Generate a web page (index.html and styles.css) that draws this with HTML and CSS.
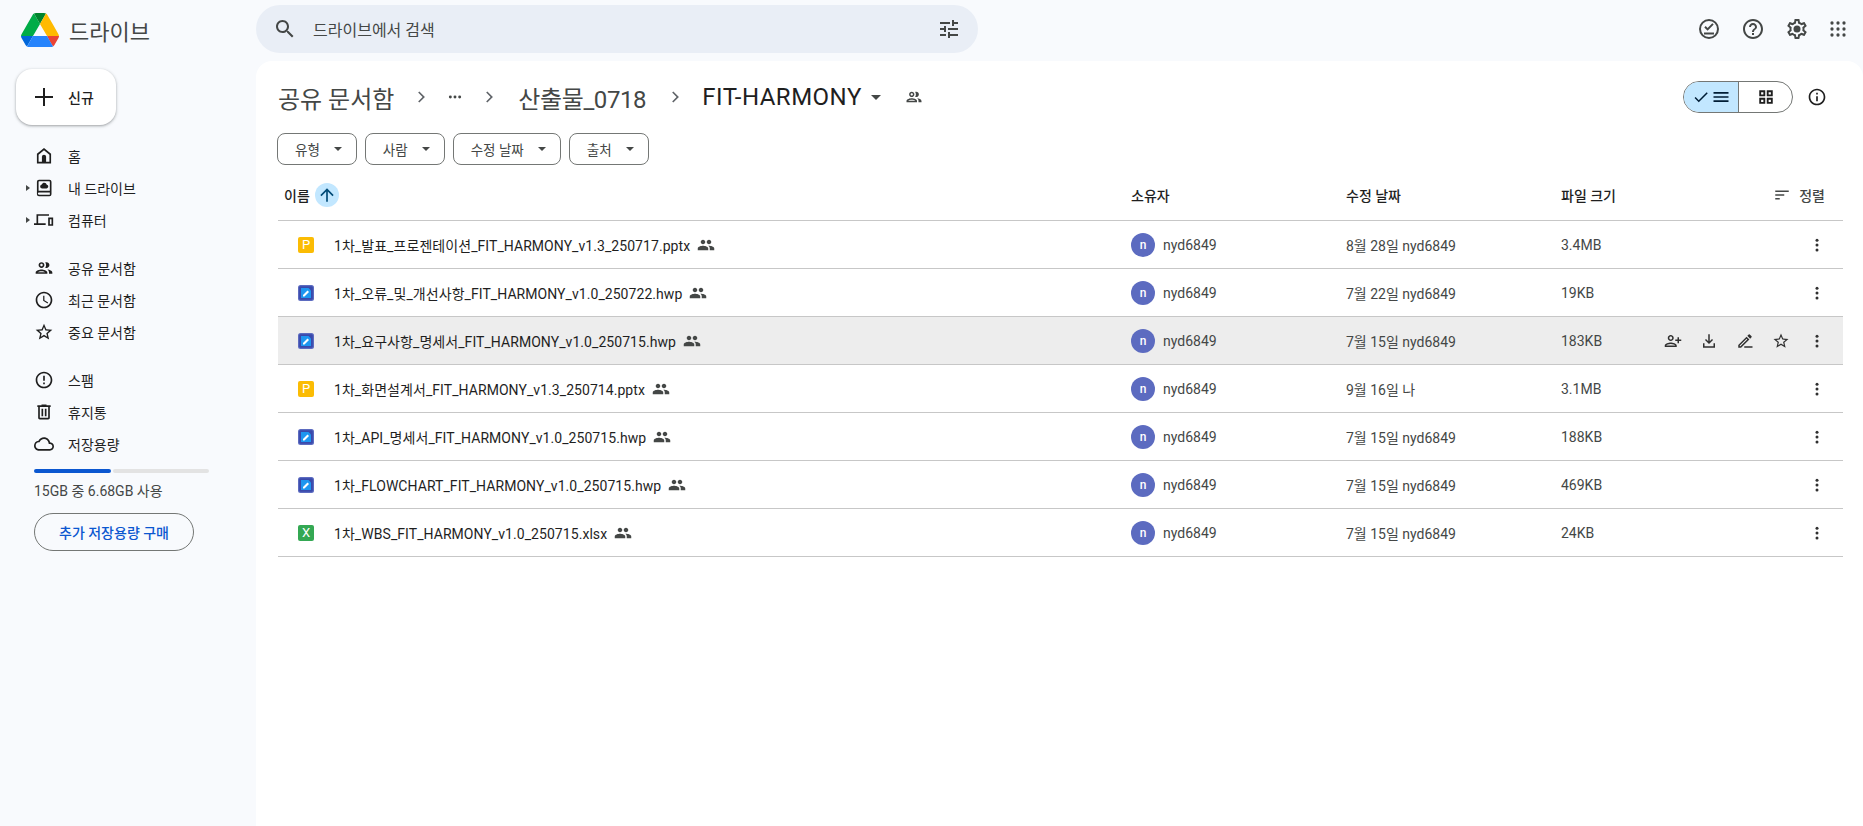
FILE: index.html
```html
<!DOCTYPE html>
<html lang="ko">
<head>
<meta charset="utf-8">
<title>Drive</title>
<link rel="stylesheet" href="styles.css">
</head>
<body>
<svg class="sprite" xmlns="http://www.w3.org/2000/svg">
  <symbol id="i-home" viewBox="0 0 24 24"><path fill-rule="evenodd" d="M12 2.500 3.500 9.400V21h17V9.400L12 2.500zm0 2.600 6.500 5.300V19h-13v-8.600L12 5.100z"/><path d="M9.500 13a2.500 2.500 0 0 1 5 0v7h-5z"/></symbol>
  <symbol id="i-mydrive" viewBox="0 0 24 24"><path d="M6 2h12.500A2.500 2.500 0 0 1 21 4.500v15a2.500 2.500 0 0 1-2.500 2.500H6a2.500 2.500 0 0 1-2.500-2.500v-15A2.500 2.500 0 0 1 6 2zm0 2a.5.5 0 0 0-.5.5V15.400c.2-.1.400-.1.500-.1h13V4.500a.5.5 0 0 0-.5-.5H6zm0 13.300a1.300 1.300 0 0 0 0 2.700h13v-2.700H6zM12.300 5.800c1.500 0 2.700 1 3 2.400 1 .2 1.800 1 1.800 2.100 0 1.200-1 2.200-2.200 2.200H9.800c-1.300 0-2.400-1-2.400-2.400 0-1.200.9-2.200 2-2.400.5-1.200 1.600-1.900 2.900-1.900z"/></symbol>
  <symbol id="i-computer" viewBox="0 0 24 24"><path d="M3 5h15v2H5v9h9v2H-1v-2h4V5zm14 4h6v10h-6V9zm2 2v6h2v-6h-2z"/></symbol>
  <symbol id="i-shared" viewBox="0 0 24 24"><path d="M9 13.750c-2.340 0-7 1.170-7 3.500V19h14v-1.750c0-2.330-4.660-3.500-7-3.500zM4.340 17c.84-.58 2.870-1.250 4.660-1.250s3.820.67 4.660 1.250H4.340zM9 12c1.930 0 3.500-1.570 3.500-3.500S10.930 5 9 5 5.500 6.570 5.500 8.500 7.070 12 9 12zm0-5c.83 0 1.500.67 1.500 1.500S9.830 10 9 10s-1.500-.67-1.500-1.500S8.170 7 9 7zm7.040 6.810c1.160.84 1.960 1.960 1.960 3.440V19h4v-1.750c0-2.020-3.500-3.170-5.960-3.440zM15 12c1.930 0 3.500-1.570 3.500-3.500S16.930 5 15 5c-.54 0-1.040.13-1.500.35.63.89 1 1.980 1 3.150s-.37 2.260-1 3.150c.46.22.96.35 1.500.35z"/></symbol>
  <symbol id="i-people" viewBox="0 0 24 24"><path d="M16 11c1.660 0 2.990-1.340 2.990-3S17.660 5 16 5s-3 1.340-3 3 1.340 3 3 3zm-8 0c1.660 0 2.990-1.340 2.990-3S9.660 5 8 5 5 6.340 5 8s1.340 3 3 3zm0 2c-2.330 0-7 1.170-7 3.500V19h14v-2.500c0-2.330-4.670-3.500-7-3.500zm8 0c-.29 0-.62.02-.97.05 1.160.84 1.970 1.970 1.970 3.450V19h6v-2.500c0-2.330-4.670-3.500-7-3.500z"/></symbol>
  <symbol id="i-clock" viewBox="0 0 24 24"><path d="M11.990 2C6.470 2 2 6.480 2 12s4.470 10 9.990 10C17.520 22 22 17.520 22 12S17.520 2 11.990 2zM12 20c-4.420 0-8-3.580-8-8s3.580-8 8-8 8 3.580 8 8-3.580 8-8 8zm.5-13H11v6l5.250 3.150.75-1.230-4.500-2.670z"/></symbol>
  <symbol id="i-star" viewBox="0 0 24 24"><path d="M22 9.240l-7.190-.62L12 2 9.190 8.630 2 9.240l5.460 4.730L5.820 21 12 17.270 18.180 21l-1.630-7.030L22 9.240zM12 15.400l-3.760 2.270 1-4.280-3.320-2.880 4.380-.38L12 6.100l1.710 4.040 4.380.38-3.320 2.880 1 4.280L12 15.400z"/></symbol>
  <symbol id="i-spam" viewBox="0 0 24 24"><path d="M11 15h2v2h-2zm0-8h2v6h-2zm.99-5C6.470 2 2 6.480 2 12s4.470 10 9.990 10C17.520 22 22 17.520 22 12S17.520 2 11.990 2zM12 20c-4.420 0-8-3.580-8-8s3.580-8 8-8 8 3.580 8 8-3.580 8-8 8z"/></symbol>
  <symbol id="i-trash" viewBox="0 0 24 24"><path d="M15 4V3H9v1H4v2h1v13c0 1.100.9 2 2 2h10c1.100 0 2-.9 2-2V6h1V4h-5zm2 15H7V6h10v13zM9 8h2v9H9zm4 0h2v9h-2z"/></symbol>
  <symbol id="i-cloud" viewBox="0 0 24 24"><path d="M19.350 10.040C18.670 6.590 15.640 4 12 4 9.110 4 6.600 5.640 5.350 8.040 2.340 8.360 0 10.910 0 14c0 3.310 2.690 6 6 6h13c2.760 0 5-2.240 5-5 0-2.640-2.050-4.780-4.650-4.960zM19 18H6c-2.210 0-4-1.790-4-4 0-2.050 1.530-3.760 3.560-3.970l1.070-.11.5-.95C8.080 7.140 9.940 6 12 6c2.620 0 4.880 1.860 5.390 4.430l.3 1.500 1.530.11c1.560.1 2.780 1.410 2.780 2.960 0 1.650-1.350 3-3 3z"/></symbol>
  <symbol id="i-search" viewBox="0 0 24 24"><path d="M15.500 14h-.79l-.28-.27C15.410 12.590 16 11.110 16 9.500 16 5.910 13.090 3 9.500 3S3 5.910 3 9.500 5.910 16 9.500 16c1.610 0 3.090-.59 4.230-1.570l.27.28v.79l5 4.990L20.490 19l-4.990-5zm-6 0C7.010 14 5 11.990 5 9.500S7.010 5 9.500 5 14 7.010 14 9.500 11.990 14 9.500 14z"/></symbol>
  <symbol id="i-tune" viewBox="0 0 24 24"><path d="M3 17v2h6v-2H3zM3 5v2h10V5H3zm10 16v-2h8v-2h-8v-2h-2v6h2zM7 9v2H3v2h4v2h2V9H7zm14 4v-2H11v2h10zm-6-4h2V7h4V5h-4V3h-2v6z"/></symbol>
  <symbol id="i-offline" viewBox="0 0 24 24"><path d="M12 2a10 10 0 1 0 0 20 10 10 0 0 0 0-20zm0 18a8 8 0 1 1 0-16 8 8 0 0 1 0 16zM7 15.500h10v2H7zM10.600 13.700 7.300 10.400l1.400-1.400 1.900 1.900 4.700-4.700 1.400 1.400z"/></symbol>
  <symbol id="i-help" viewBox="0 0 24 24"><path d="M11 18h2v-2h-2v2zm1-16C6.480 2 2 6.480 2 12s4.480 10 10 10 10-4.480 10-10S17.520 2 12 2zm0 18c-4.410 0-8-3.590-8-8s3.590-8 8-8 8 3.590 8 8-3.590 8-8 8zm0-14c-2.210 0-4 1.790-4 4h2c0-1.100.9-2 2-2s2 .9 2 2c0 2-3 1.750-3 5h2c0-2.250 3-2.500 3-5 0-2.210-1.790-4-4-4z"/></symbol>
  <symbol id="i-gear" viewBox="0 0 24 24"><path d="M19.430 12.980c.04-.32.07-.64.07-.98 0-.34-.03-.66-.07-.98l2.110-1.650c.19-.15.24-.42.12-.64l-2-3.460c-.09-.16-.26-.25-.44-.25-.06 0-.12.01-.17.03l-2.490 1c-.52-.4-1.080-.73-1.690-.98l-.38-2.650C14.460 2.180 14.250 2 14 2h-4c-.25 0-.46.18-.49.42l-.38 2.650c-.61.25-1.170.59-1.690.98l-2.490-1c-.06-.02-.12-.03-.18-.03-.17 0-.34.09-.43.25l-2 3.460c-.13.22-.07.49.12.64l2.110 1.650c-.04.32-.07.65-.07.98 0 .33.03.66.07.98l-2.110 1.650c-.19.15-.24.42-.12.64l2 3.460c.09.16.26.25.44.25.06 0 .12-.01.17-.03l2.490-1c.52.4 1.080.73 1.690.98l.38 2.650c.03.24.24.42.49.42h4c.25 0 .46-.18.49-.42l.38-2.650c.61-.25 1.170-.59 1.690-.98l2.490 1c.06.02.12.03.18.03.17 0 .34-.09.43-.25l2-3.460c.12-.22.07-.49-.12-.64l-2.110-1.650zm-1.980-1.710c.04.31.05.52.05.73 0 .21-.02.43-.05.73l-.14 1.130.89.7 1.080.84-.7 1.210-1.270-.51-1.040-.42-.9.68c-.43.32-.84.56-1.250.73l-1.060.43-.16 1.130-.2 1.350h-1.400l-.19-1.350-.16-1.130-1.060-.43c-.43-.18-.83-.41-1.230-.71l-.91-.7-1.060.43-1.270.51-.7-1.210 1.080-.84.89-.7-.14-1.130c-.03-.31-.05-.54-.05-.74s.02-.43.05-.73l.14-1.130-.89-.7-1.080-.84.7-1.210 1.270.51 1.040.42.9-.68c.43-.32.84-.56 1.250-.73l1.060-.43.16-1.130.2-1.350h1.390l.19 1.350.16 1.130 1.060.43c.43.18.83.41 1.230.71l.91.7 1.060-.43 1.270-.51.7 1.210-1.070.85-.89.7.14 1.130z"/><circle cx="12" cy="12" r="3.500"/></symbol>
  <symbol id="i-apps" viewBox="0 0 24 24"><circle cx="4" cy="4" r="2.200"/><circle cx="12" cy="4" r="2.200"/><circle cx="20" cy="4" r="2.200"/><circle cx="4" cy="12" r="2.200"/><circle cx="12" cy="12" r="2.200"/><circle cx="20" cy="12" r="2.200"/><circle cx="4" cy="20" r="2.200"/><circle cx="12" cy="20" r="2.200"/><circle cx="20" cy="20" r="2.200"/></symbol>
  <symbol id="i-info" viewBox="0 0 24 24"><path d="M11 7h2v2h-2zm0 4h2v6h-2zm1-9C6.480 2 2 6.480 2 12s4.480 10 10 10 10-4.480 10-10S17.520 2 12 2zm0 18c-4.410 0-8-3.590-8-8s3.590-8 8-8 8 3.590 8 8-3.590 8-8 8z"/></symbol>
  <symbol id="i-more" viewBox="0 0 24 24"><circle cx="12" cy="5.500" r="2"/><circle cx="12" cy="12" r="2"/><circle cx="12" cy="18.500" r="2"/></symbol>
  <symbol id="i-addperson" viewBox="0 0 24 24"><path transform="matrix(-1 0 0 1 24 0)" d="M15 12c2.210 0 4-1.790 4-4s-1.790-4-4-4-4 1.790-4 4 1.790 4 4 4zm0-6c1.100 0 2 .9 2 2s-.9 2-2 2-2-.9-2-2 .9-2 2-2zm0 8c-2.670 0-8 1.340-8 4v2h16v-2c0-2.660-5.330-4-8-4zm-6 4c.22-.72 3.310-2 6-2 2.700 0 5.800 1.290 6 2H9zm-3-3v-3h3v-2H6V7H4v3H1v2h3v3h2z"/></symbol>
  <symbol id="i-download" viewBox="0 0 24 24"><path d="M11 3h2v9.200l3-3 1.400 1.400L12 16l-5.400-5.400L8 9.200l3 3V3zM4 15h2v4h12v-4h2v6H4z"/></symbol>
  <symbol id="i-rename" viewBox="0 0 24 24"><path d="M3 17.250V21h3.750L17.810 9.940l-3.750-3.750L3 17.250zM5.920 19H5v-.92l9.060-9.060.92.92L5.920 19zM20.710 7.040a1 1 0 0 0 0-1.410l-2.340-2.340a1 1 0 0 0-1.410 0l-1.830 1.830 3.750 3.750 1.830-1.830zM11 19h11v2H11z"/></symbol>
  <symbol id="i-sort" viewBox="0 0 24 24"><path d="M3 18h6v-2H3v2zM3 6v2h18V6H3zm0 7h12v-2H3v2z"/></symbol>
  <symbol id="i-up" viewBox="0 0 24 24"><path d="M4 12l1.410 1.410L11 7.830V20h2V7.830l5.580 5.590L20 12l-8-8-8 8z"/></symbol>
  <symbol id="i-check" viewBox="0 0 24 24"><path d="M9 16.170 4.830 12l-1.420 1.410L9 19 21 7l-1.410-1.410z"/></symbol>
  <symbol id="i-menu" viewBox="0 0 24 24"><path d="M3 18h18v-2H3v2zm0-5h18v-2H3v2zm0-7v2h18V6H3z"/></symbol>
  <symbol id="i-grid" viewBox="0 0 24 24"><path d="M3 3h8v8H3V3zm2.500 2.500v3h3v-3h-3zM13 3h8v8h-8V3zm2.500 2.500v3h3v-3h-3zM3 13h8v8H3v-8zm2.500 2.500v3h3v-3h-3zM13 13h8v8h-8v-8zm2.500 2.500v3h3v-3h-3z"/></symbol>
  <symbol id="i-chev" viewBox="0 0 24 24"><path d="M8.600 6.700 10 5.300l6.700 6.700-6.700 6.700-1.400-1.400 5.300-5.300z"/></symbol>
  <symbol id="i-dots" viewBox="0 0 24 24"><circle cx="5" cy="12" r="2.200"/><circle cx="12" cy="12" r="2.200"/><circle cx="19" cy="12" r="2.200"/></symbol>
  <symbol id="i-plus" viewBox="0 0 24 24"><path d="M11 3h2v8h8v2h-8v8h-2v-8H3v-2h8z"/></symbol>
  <symbol id="i-hwp" viewBox="0 0 16 16"><rect width="16" height="16" rx="2.500" fill="#5c6bc0"/><rect x="1.200" y="1.200" width="13.600" height="13.600" rx="1.200" fill="#3949ab"/><path d="M3 3h7.500L13 5.500V13H3z" fill="#1e96f0"/><path d="M5 11.500v-1.500l4.500-4.500 1.500 1.500-4.500 4.500z" fill="#fff"/></symbol>
</svg>

<div class="app">
  <div class="brand">
    <svg class="logo" viewBox="0 0 87.300 78"><path d="m6.600 66.850 3.850 6.650c.8 1.400 1.950 2.500 3.300 3.300l13.750-23.800h-27.500c0 1.550.4 3.100 1.200 4.500z" fill="#0066da"/><path d="m43.650 25-13.750-23.800c-1.350.8-2.500 1.900-3.300 3.300l-25.400 44a9.060 9.060 0 0 0 -1.200 4.500h27.500z" fill="#00ac47"/><path d="m73.550 76.800c1.350-.8 2.500-1.900 3.300-3.300l1.600-2.750 7.650-13.250c.8-1.400 1.200-2.950 1.200-4.500h-27.502l5.852 11.500z" fill="#ea4335"/><path d="m43.650 25 13.750-23.800c-1.350-.8-2.900-1.200-4.500-1.200h-18.500c-1.600 0-3.150.45-4.500 1.200z" fill="#00832d"/><path d="m59.800 53h-32.300l-13.750 23.800c1.350.8 2.900 1.200 4.500 1.200h50.800c1.600 0 3.150-.45 4.500-1.200z" fill="#2684fc"/><path d="m73.400 26.500-12.700-22c-.8-1.400-1.950-2.500-3.300-3.300l-13.750 23.800 16.150 28h27.450c0-1.550-.4-3.100-1.200-4.500z" fill="#ffba00"/></svg>
    <span class="brand-name">드라이브</span>
  </div>

  <header class="topbar">
    <div class="search">
      <svg class="ic ic-search"><use href="#i-search"/></svg>
      <span class="search-text">드라이브에서 검색</span>
      <svg class="ic ic-tune"><use href="#i-tune"/></svg>
    </div>
    <div class="top-actions">
      <svg class="ic ic-top"><use href="#i-offline"/></svg>
      <svg class="ic ic-top"><use href="#i-help"/></svg>
      <svg class="ic ic-top"><use href="#i-gear"/></svg>
      <svg class="ic ic-apps"><use href="#i-apps"/></svg>
    </div>
  </header>

  <aside class="sidebar">
    <button class="new-btn"><svg class="ic ic-plus"><use href="#i-plus"/></svg><span>신규</span></button>
    <nav class="nav-group">
      <a class="nav-item"><i class="nav-caret"></i><svg class="ic ic-nav"><use href="#i-home"/></svg><span>홈</span></a>
      <a class="nav-item"><i class="nav-caret nav-caret-on"></i><svg class="ic ic-nav"><use href="#i-mydrive"/></svg><span>내 드라이브</span></a>
      <a class="nav-item"><i class="nav-caret nav-caret-on"></i><svg class="ic ic-nav"><use href="#i-computer"/></svg><span>컴퓨터</span></a>
    </nav>
    <nav class="nav-group">
      <a class="nav-item"><i class="nav-caret"></i><svg class="ic ic-nav"><use href="#i-shared"/></svg><span>공유 문서함</span></a>
      <a class="nav-item"><i class="nav-caret"></i><svg class="ic ic-nav"><use href="#i-clock"/></svg><span>최근 문서함</span></a>
      <a class="nav-item"><i class="nav-caret"></i><svg class="ic ic-nav"><use href="#i-star"/></svg><span>중요 문서함</span></a>
    </nav>
    <nav class="nav-group">
      <a class="nav-item"><i class="nav-caret"></i><svg class="ic ic-nav"><use href="#i-spam"/></svg><span>스팸</span></a>
      <a class="nav-item"><i class="nav-caret"></i><svg class="ic ic-nav"><use href="#i-trash"/></svg><span>휴지통</span></a>
      <a class="nav-item"><i class="nav-caret"></i><svg class="ic ic-nav"><use href="#i-cloud"/></svg><span>저장용량</span></a>
    </nav>
    <div class="storage">
      <div class="storage-bar"><div class="storage-used"></div><div class="storage-free"></div></div>
      <div class="storage-text">15GB 중 6.68GB 사용</div>
      <button class="buy-btn">추가 저장용량 구매</button>
    </div>
  </aside>

  <main class="panel">
    <div class="crumb-row">
      <div class="crumbs">
        <span class="crumb">공유 문서함</span>
        <svg class="ic ic-chev ic-chev-first"><use href="#i-chev"/></svg>
        <svg class="ic ic-dots"><use href="#i-dots"/></svg>
        <svg class="ic ic-chev"><use href="#i-chev"/></svg>
        <span class="crumb crumb-tight">산출물_0718</span>
        <svg class="ic ic-chev ic-chev-last"><use href="#i-chev"/></svg>
        <span class="crumb crumb-current">FIT-HARMONY</span>
        <i class="caret caret-big"></i>
        <svg class="ic ic-crumb-people"><use href="#i-shared"/></svg>
      </div>
      <div class="view-tools">
        <div class="toggle">
          <div class="toggle-list"><svg class="ic ic-check"><use href="#i-check"/></svg><svg class="ic ic-menu"><use href="#i-menu"/></svg></div>
          <div class="toggle-grid"><svg class="ic ic-grid"><use href="#i-grid"/></svg></div>
        </div>
        <svg class="ic ic-info"><use href="#i-info"/></svg>
      </div>
    </div>

    <div class="chips">
      <div class="chip">유형<i class="caret"></i></div>
      <div class="chip">사람<i class="caret"></i></div>
      <div class="chip">수정 날짜<i class="caret"></i></div>
      <div class="chip">출처<i class="caret"></i></div>
    </div>

    <div class="table">
      <div class="row row-head">
        <div class="head-name"><span>이름</span><span class="sort-dir"><svg class="ic ic-up"><use href="#i-up"/></svg></span></div>
        <div>소유자</div>
        <div>수정 날짜</div>
        <div>파일 크기</div>
        <div class="head-sort"><svg class="ic ic-sort"><use href="#i-sort"/></svg><span>정렬</span></div>
      </div>

      <div class="row">
        <div class="cell-name"><span class="tile tile-p">P</span><span class="fname">1차_발표_프로젠테이션_FIT_HARMONY_v1.3_250717.pptx</span><svg class="ic ic-people"><use href="#i-people"/></svg></div>
        <div class="cell-owner"><span class="avatar">n</span>nyd6849</div>
        <div>8월 28일 nyd6849</div>
        <div>3.4MB</div>
        <div class="cell-actions"><svg class="ic ic-act"><use href="#i-more"/></svg></div>
      </div>
      <div class="row">
        <div class="cell-name"><svg class="tile-svg"><use href="#i-hwp"/></svg><span class="fname">1차_오류_및_개선사항_FIT_HARMONY_v1.0_250722.hwp</span><svg class="ic ic-people"><use href="#i-people"/></svg></div>
        <div class="cell-owner"><span class="avatar">n</span>nyd6849</div>
        <div>7월 22일 nyd6849</div>
        <div>19KB</div>
        <div class="cell-actions"><svg class="ic ic-act"><use href="#i-more"/></svg></div>
      </div>
      <div class="row row-hover">
        <div class="cell-name"><svg class="tile-svg"><use href="#i-hwp"/></svg><span class="fname">1차_요구사항_명세서_FIT_HARMONY_v1.0_250715.hwp</span><svg class="ic ic-people"><use href="#i-people"/></svg></div>
        <div class="cell-owner"><span class="avatar">n</span>nyd6849</div>
        <div>7월 15일 nyd6849</div>
        <div>183KB</div>
        <div class="cell-actions">
          <svg class="ic ic-act"><use href="#i-addperson"/></svg>
          <svg class="ic ic-act"><use href="#i-download"/></svg>
          <svg class="ic ic-act"><use href="#i-rename"/></svg>
          <svg class="ic ic-act"><use href="#i-star"/></svg>
          <svg class="ic ic-act"><use href="#i-more"/></svg>
        </div>
      </div>
      <div class="row">
        <div class="cell-name"><span class="tile tile-p">P</span><span class="fname">1차_화면설계서_FIT_HARMONY_v1.3_250714.pptx</span><svg class="ic ic-people"><use href="#i-people"/></svg></div>
        <div class="cell-owner"><span class="avatar">n</span>nyd6849</div>
        <div>9월 16일 나</div>
        <div>3.1MB</div>
        <div class="cell-actions"><svg class="ic ic-act"><use href="#i-more"/></svg></div>
      </div>
      <div class="row">
        <div class="cell-name"><svg class="tile-svg"><use href="#i-hwp"/></svg><span class="fname">1차_API_명세서_FIT_HARMONY_v1.0_250715.hwp</span><svg class="ic ic-people"><use href="#i-people"/></svg></div>
        <div class="cell-owner"><span class="avatar">n</span>nyd6849</div>
        <div>7월 15일 nyd6849</div>
        <div>188KB</div>
        <div class="cell-actions"><svg class="ic ic-act"><use href="#i-more"/></svg></div>
      </div>
      <div class="row">
        <div class="cell-name"><svg class="tile-svg"><use href="#i-hwp"/></svg><span class="fname">1차_FLOWCHART_FIT_HARMONY_v1.0_250715.hwp</span><svg class="ic ic-people"><use href="#i-people"/></svg></div>
        <div class="cell-owner"><span class="avatar">n</span>nyd6849</div>
        <div>7월 15일 nyd6849</div>
        <div>469KB</div>
        <div class="cell-actions"><svg class="ic ic-act"><use href="#i-more"/></svg></div>
      </div>
      <div class="row">
        <div class="cell-name"><span class="tile tile-x">X</span><span class="fname">1차_WBS_FIT_HARMONY_v1.0_250715.xlsx</span><svg class="ic ic-people"><use href="#i-people"/></svg></div>
        <div class="cell-owner"><span class="avatar">n</span>nyd6849</div>
        <div>7월 15일 nyd6849</div>
        <div>24KB</div>
        <div class="cell-actions"><svg class="ic ic-act"><use href="#i-more"/></svg></div>
      </div>
    </div>
  </main>
</div>
</body>
</html>
```
FILE: styles.css
```css
* { box-sizing: border-box; }
html, body { margin: 0; height: 100%; overflow: hidden; }
body {
  background: #f8fafd;
  color: #1f1f1f;
  font-family: Roboto, "Noto Sans CJK KR", sans-serif;
  font-size: 14px;
}
.sprite { display: none; }
.ic { display: block; flex: none; fill: currentColor; overflow: visible; }

.app {
  display: grid;
  grid-template-columns: 256px 1fr;
  grid-template-rows: 61px 1fr;
  height: 826px;
}

/* brand */
.brand { display: flex; align-items: center; padding: 0 0 2px 21px; gap: 10px; }
.logo { width: 38px; height: 34px; }
.brand-name { font-size: 22px; color: #444746; }

/* top bar */
.topbar { display: flex; align-items: flex-start; justify-content: space-between; padding: 5px 16px 0 0; }
.search {
  width: 722px; height: 48px; border-radius: 24px; background: #e9eef6;
  display: flex; align-items: center; padding: 0 17px; color: #444746;
}
.ic-search { width: 24px; height: 24px; }
.search-text { margin-left: 16px; font-size: 16px; flex: 1; color: #444746; }
.ic-tune { width: 24px; height: 24px; }
.top-actions { display: flex; align-items: center; gap: 20px; height: 48px; color: #444746; }
.ic-top { width: 24px; height: 24px; }
.ic-apps { width: 18px; height: 18px; }

/* sidebar */
.sidebar { padding: 8px 0 0 0; }
.new-btn {
  display: flex; align-items: center; width: 100px; height: 56px; margin: 0 0 15px 16px;
  padding: 0 0 0 16px; border: 0; border-radius: 16px; background: #fff; color: #1f1f1f;
  box-shadow: 0 1px 2px rgba(60,64,67,.3), 0 1px 3px 1px rgba(60,64,67,.15);
  font: 500 14px Roboto, "Noto Sans CJK KR", sans-serif;
}
.ic-plus { width: 24px; height: 24px; margin-right: 12px; }
.nav-group { margin-bottom: 16px; }
.nav-item { display: flex; align-items: center; height: 32px; padding-left: 26px; color: #1f1f1f; font-size: 14px; }
.nav-caret { width: 8px; flex: none; }
.nav-caret-on { width: 0; height: 0; margin-right: 4px; border-left: 4px solid #444746; border-top: 3.5px solid transparent; border-bottom: 3.5px solid transparent; }
.ic-nav { width: 20px; height: 20px; margin-right: 14px; color: #1f1f1f; }
.storage { padding-left: 34px; margin-top: -7px; }
.storage-bar { display: flex; gap: 2px; width: 175px; height: 4px; }
.storage-used { width: 77px; background: #0b57d0; border-radius: 2px; }
.storage-free { flex: 1; background: #e3e3e3; border-radius: 2px; }
.storage-text { margin-top: 9px; font-size: 14px; color: #444746; line-height: 18px; }
.buy-btn {
  display: block; width: 160px; height: 38px; margin-top: 13px; border: 1px solid #747775; border-radius: 19px;
  background: transparent; color: #0b57d0; font: 500 14px Roboto, "Noto Sans CJK KR", sans-serif;
}

/* main panel */
.panel { background: #fff; border-radius: 16px 16px 0 0; padding: 20px 20px 0 22px; min-width: 0; }
.crumb-row { display: flex; align-items: center; justify-content: space-between; height: 32px; padding-right: 16px; }
.crumbs { display: flex; align-items: center; color: #444746; }
.crumb { font-size: 24px; color: #444746; white-space: nowrap; }
.crumb-tight { letter-spacing: -.4px; }
.crumb-current { color: #1f1f1f; letter-spacing: .5px; }
.ic-chev { width: 20px; height: 20px; color: #5f6368; margin: 0 19px; }
.ic-chev-first { margin-left: 17px; }
.ic-chev-last { margin-right: 17px; }
.ic-dots { width: 16px; height: 16px; color: #444746; margin: 0 -3px; }
.caret { display: inline-block; width: 0; height: 0; border-left: 4px solid transparent; border-right: 4px solid transparent; border-top: 4px solid #444746; }
.caret-big { margin-left: 9px; border-left-width: 5px; border-right-width: 5px; border-top-width: 5px; }
.ic-crumb-people { width: 18px; height: 18px; margin-left: 24px; color: #444746; }

.view-tools { display: flex; align-items: center; gap: 14px; }
.toggle { display: flex; width: 110px; height: 32px; border: 1px solid #747775; border-radius: 16px; overflow: hidden; }
.toggle-list { width: 55px; background: #c2e7ff; color: #001d35; display: flex; align-items: center; justify-content: center; gap: 1px; border-right: 1px solid #747775; }
.toggle-grid { flex: 1; display: flex; align-items: center; justify-content: center; color: #1f1f1f; }
.ic-check { width: 18px; height: 18px; }
.ic-menu { width: 20px; height: 20px; }
.ic-grid { width: 18px; height: 18px; }
.ic-info { width: 20px; height: 20px; color: #1f1f1f; }

/* filter chips */
.chips { display: flex; gap: 8px; margin-top: 20px; margin-left: -1px; }
.chip {
  display: flex; align-items: center; gap: 14px; height: 32px; padding: 0 14px 0 17px;
  border: 1px solid #747775; border-radius: 8px; font-size: 13.5px; color: #444746; white-space: nowrap;
}

/* table */
.table { margin-top: 5px; }
.row {
  display: grid; grid-template-columns: 853px 215px 215px 99px 1fr;
  align-items: center; height: 48px; border-bottom: 1px solid #c7c7c7;
  color: #444746; font-size: 14px;
}
.row-head { height: 51px; color: #1f1f1f; font-weight: 500; }
.row-hover { background: #ededed; }
.head-name { display: flex; align-items: center; gap: 5px; padding-left: 6px; }
.sort-dir { width: 24px; height: 24px; border-radius: 50%; background: #c2e7ff; display: flex; align-items: center; justify-content: center; color: #004a77; }
.ic-up { width: 20px; height: 20px; }
.head-sort { display: flex; align-items: center; gap: 8px; justify-content: flex-end; padding-right: 18px; color: #444746; }
.ic-sort { width: 18px; height: 18px; }

.cell-name { display: flex; align-items: center; padding-left: 20px; color: #1f1f1f; }
.tile, .tile-svg { width: 16px; height: 16px; flex: none; margin-right: 20px; }
.tile { border-radius: 2px; color: #fff; display: flex; align-items: center; justify-content: center; font-size: 13px; }
.tile-p { background: #fbbc04; }
.tile-x { background: #34a853; }
.fname { white-space: nowrap; letter-spacing: .06px; }
.ic-people { width: 18px; height: 18px; margin-left: 7px; color: #444746; }
.cell-owner { display: flex; align-items: center; gap: 8px; }
.avatar { width: 24px; height: 24px; border-radius: 50%; background: #5c6bc0; color: #fff; display: flex; align-items: center; justify-content: center; font-size: 12px; font-weight: 500; }
.cell-actions { display: flex; align-items: center; justify-content: flex-end; gap: 18px; padding-right: 17px; color: #303030; }
.ic-act { width: 18px; height: 18px; }
```
